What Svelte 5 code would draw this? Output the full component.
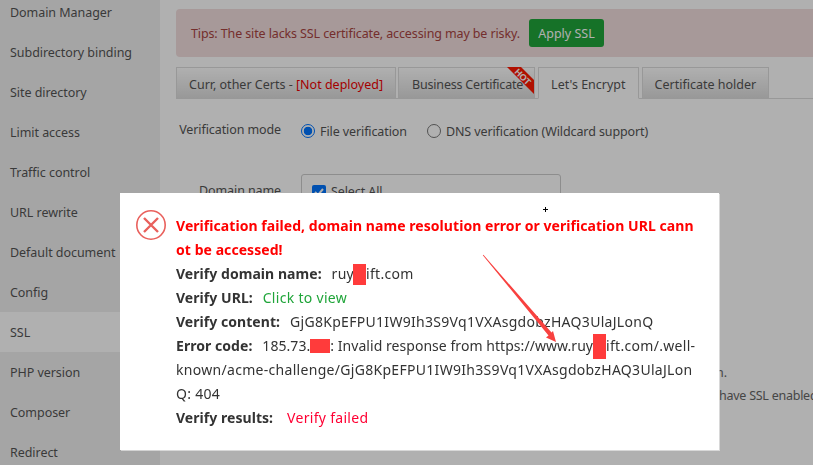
<script>
    const menu = ["Domain Manager", "Subdirectory binding", "Site directory", "Limit access", "Traffic control", "URL rewrite", "Default document", "Config", "SSL", "PHP version", "Composer", "Redirect"];
</script>

<div class="page">
    <aside class="sidebar">
        {#each menu as item}
            <div class="menu-item" class:active={item === "SSL"}>{item}</div>
        {/each}
    </aside>

    <main class="content">
        <div class="alert">
            <span class="tips">Tips: The site lacks SSL certificate, accessing may be risky.</span>
            <button type="button" class="btn-apply">Apply SSL</button>
        </div>

        <div class="tabs">
            <div class="tab">Curr, other Certs - <span class="warn">[Not deployed]</span></div>
            <div class="tab hot">
                Business Certificate
                <svg class="ribbon" width="28" height="28" viewBox="0 0 28 28">
                    <polygon points="0,0 14,0 27,13 27,27" fill="#ff1800" />
                    <text x="0" y="0" transform="translate(7 5.6) rotate(45)" fill="#fff" font-size="9" font-weight="700" font-family="'Liberation Sans', sans-serif">HOT</text>
                </svg>
            </div>
            <div class="tab current">Let's Encrypt</div>
            <div class="tab">Certificate holder</div>
        </div>

        <div class="row mode">
            <span class="label">Verification mode</span>
            <span class="radio on"></span><span class="radio-text">File verification</span>
            <span class="radio"></span><span class="radio-text">DNS verification (Wildcard support)</span>
        </div>

        <div class="row domain">
            <span class="label">Domain name</span>
            <div class="domain-box">
                <span class="check">
                    <svg width="14" height="14" viewBox="0 0 14 14"><path d="M3 7l3 3 5-6" fill="none" stroke="#fff" stroke-width="2" /></svg>
                </span>
                Select All
            </div>
        </div>

        <ul class="help">
            <li class="end">Please check the domain is resolved to this server before verification.</li>
            <li class="start">have SSL enabled sites</li>
        </ul>
    </main>
</div>

<div class="shade"></div>

<div class="dialog">
    <svg class="err" width="32" height="32" viewBox="0 0 32 32">
        <circle cx="16" cy="16" r="14.2" fill="none" stroke="#e9605c" stroke-width="1.6" />
        <path d="M9 9l14 14M23 9L9 23" fill="none" stroke="#e9605c" stroke-width="2.4" />
    </svg>
    <div class="body">
        <div class="title">Verification failed, domain name resolution error or verification URL cannot be accessed!</div>
        <div><b>Verify domain name:</b> <span class="val">ruy<i class="mask m1"></i>ift.com</span></div>
        <div><b>Verify URL:</b> <span class="val link">Click to view</span></div>
        <div><b>Verify content:</b> <span class="val">GjG8KpEFPU1IW9Ih3S9Vq1VXAsgdobzHAQ3UlaJLonQ</span></div>
        <div><b>Error code:</b> <span class="val"><span class="tight">185.73.<i class="mask m2"></i>: Invalid response from https://www.ruy</span><i class="mask m3"></i>ift.com/.well-known/acme-challenge/GjG8KpEFPU1IW9Ih3S9Vq1VXAsgdobzHAQ3UlaJLonQ: 404</span></div>
        <div><b>Verify results:</b> <span class="val fail">Verify failed</span></div>
    </div>
</div>

<svg class="arrow" width="813" height="465" viewBox="0 0 813 465">
    <polygon points="482.8,255.2 483.4,254.8 551.5,332.5 553,331 556,342 546,337.5 548.5,335.5" fill="#f8413f" />
</svg>
<svg class="cursor" width="5" height="5" viewBox="0 0 5 5"><path d="M2.5 0v5M0 2.5h5" stroke="#000" /></svg>

<style>
    :global(body) {
        overflow: hidden;
        background: #fff;
    }

    .page {
        display: flex;
        width: 813px;
        height: 465px;
        overflow: hidden;
        font-family: "Noto Sans", sans-serif;
        font-size: 12.5px;
        color: #555;
        background: #fff;
    }

    .sidebar {
        flex: 0 0 160px;
        background: #f0f0f0;
        margin-top: -8px;
    }

    .menu-item {
        height: 40px;
        line-height: 42px;
        padding-left: 10px;
        color: #555;
        letter-spacing: -0.05px;
    }

    .menu-item.active {
        background: #fff;
    }

    .content {
        flex: 1;
        min-width: 0;
        padding: 9px 0 0 16px;
    }

    .alert {
        display: flex;
        align-items: center;
        gap: 9px;
        height: 48px;
        padding-left: 15px;
        background: #f2dede;
        color: #a94442;
        border-radius: 4px 0 0 4px;
    }

    .tips {
        letter-spacing: -0.12px;
    }

    .btn-apply {
        width: 75px;
        height: 28px;
        border: 0;
        border-radius: 3px;
        background: #20a53a;
        color: #fff;
        font: inherit;
        padding: 0;
    }

    .tabs {
        display: flex;
        gap: 2px;
        height: 32px;
        margin-top: 10px;
        border-bottom: 1px solid #ddd;
        box-sizing: border-box;
    }

    .tab {
        position: relative;
        box-sizing: border-box;
        height: 32px;
        line-height: 34px;
        padding: 0 12px;
        border: 1px solid #ddd;
        background: linear-gradient(#fff, #ddd);
        white-space: nowrap;
    }

    .tab.hot {
        letter-spacing: -0.2px;
        padding: 0 11px 0 13px;
    }

    .tab.current {
        background: #fff;
        border-bottom-color: #fff;
        margin: 0 1px;
    }

    .warn {
        color: #e00;
    }

    .ribbon {
        position: absolute;
        right: -1px;
        top: -1px;
    }

    .row {
        display: flex;
        align-items: center;
        letter-spacing: -0.1px;
    }

    .label {
        flex: 0 0 105px;
        text-align: right;
        margin-right: 20px;
        white-space: nowrap;
    }

    .mode {
        margin-top: 21px;
        height: 20px;
    }

    .mode .label {
        margin-bottom: 2px;
    }

    .radio {
        box-sizing: border-box;
        width: 14px;
        height: 14px;
        border: 1px solid #777;
        border-radius: 50%;
        margin: 2px 5px 0 0;
    }

    .radio.on {
        border: 1px solid #0075ff;
        background: radial-gradient(circle, #0075ff 0 4px, #fff 4.6px);
    }

    .radio-text {
        margin: 2px 20px 0 0;
    }

    .domain {
        align-items: flex-start;
        margin-top: 34px;
    }

    .domain .label {
        margin-top: 8px;
    }

    .domain-box {
        box-sizing: border-box;
        width: 260px;
        height: 120px;
        border: 1px solid #ccc;
        border-radius: 3px;
        padding: 8px 10px;
        display: flex;
        align-items: center;
        align-self: flex-start;
        align-content: flex-start;
        flex-wrap: wrap;
    }

    .check {
        width: 14px;
        height: 14px;
        border-radius: 2px;
        background: #0075ff;
        margin-right: 5px;
    }

    .help {
        list-style: none;
        margin: 67px 0 0;
        padding: 0;
        color: #666;
        white-space: nowrap;
        letter-spacing: -0.1px;
    }

    .help li {
        height: 23px;
        line-height: 23px;
    }

    .help .end {
        width: 551px;
        text-align: right;
    }

    .help .start {
        padding-left: 543px;
        letter-spacing: -0.25px;
    }

    .shade {
        position: fixed;
        inset: 0;
        background: rgba(0, 0, 0, 0.31);
    }

    .dialog {
        position: fixed;
        left: 120px;
        top: 193px;
        box-sizing: border-box;
        width: 599px;
        height: 257px;
        display: flex;
        padding: 21px 21px 0 16px;
        background: #fff;
        box-shadow: 1px 1px 0 rgba(255, 255, 255, 0.5);
        font-family: "Noto Sans", sans-serif;
        font-size: 14px;
        line-height: 24px;
        color: #333;
        letter-spacing: 0.3px;
    }

    .err {
        flex: 0 0 32px;
        margin: -5px 9px 0 -1px;
    }

    .body {
        flex: 1;
        min-width: 0;
        word-break: break-all;
    }

    .title {
        color: #f00;
        font-weight: 700;
        letter-spacing: 0.06px;
    }

    .body b {
        letter-spacing: 0.05px;
    }

    .val {
        margin-left: 6px;
    }

    .tight {
        letter-spacing: 0.05px;
    }

    .link {
        color: #20a53a;
    }

    .fail {
        color: #f03;
        margin-left: 10px;
    }

    .mask {
        display: inline-block;
        background: #ff3b3b;
        vertical-align: middle;
    }

    .m1 {
        width: 13px;
        height: 21px;
        margin: -5px 0 -3px -1px;
    }

    .m2 {
        width: 20px;
        height: 14px;
        margin: -2px 0 0;
    }

    .m3 {
        width: 13px;
        height: 25px;
        margin: -7px 0 -5px;
    }

    .arrow {
        position: fixed;
        left: 0;
        top: 0;
        pointer-events: none;
    }

    .cursor {
        position: fixed;
        left: 543px;
        top: 207px;
    }
</style>
